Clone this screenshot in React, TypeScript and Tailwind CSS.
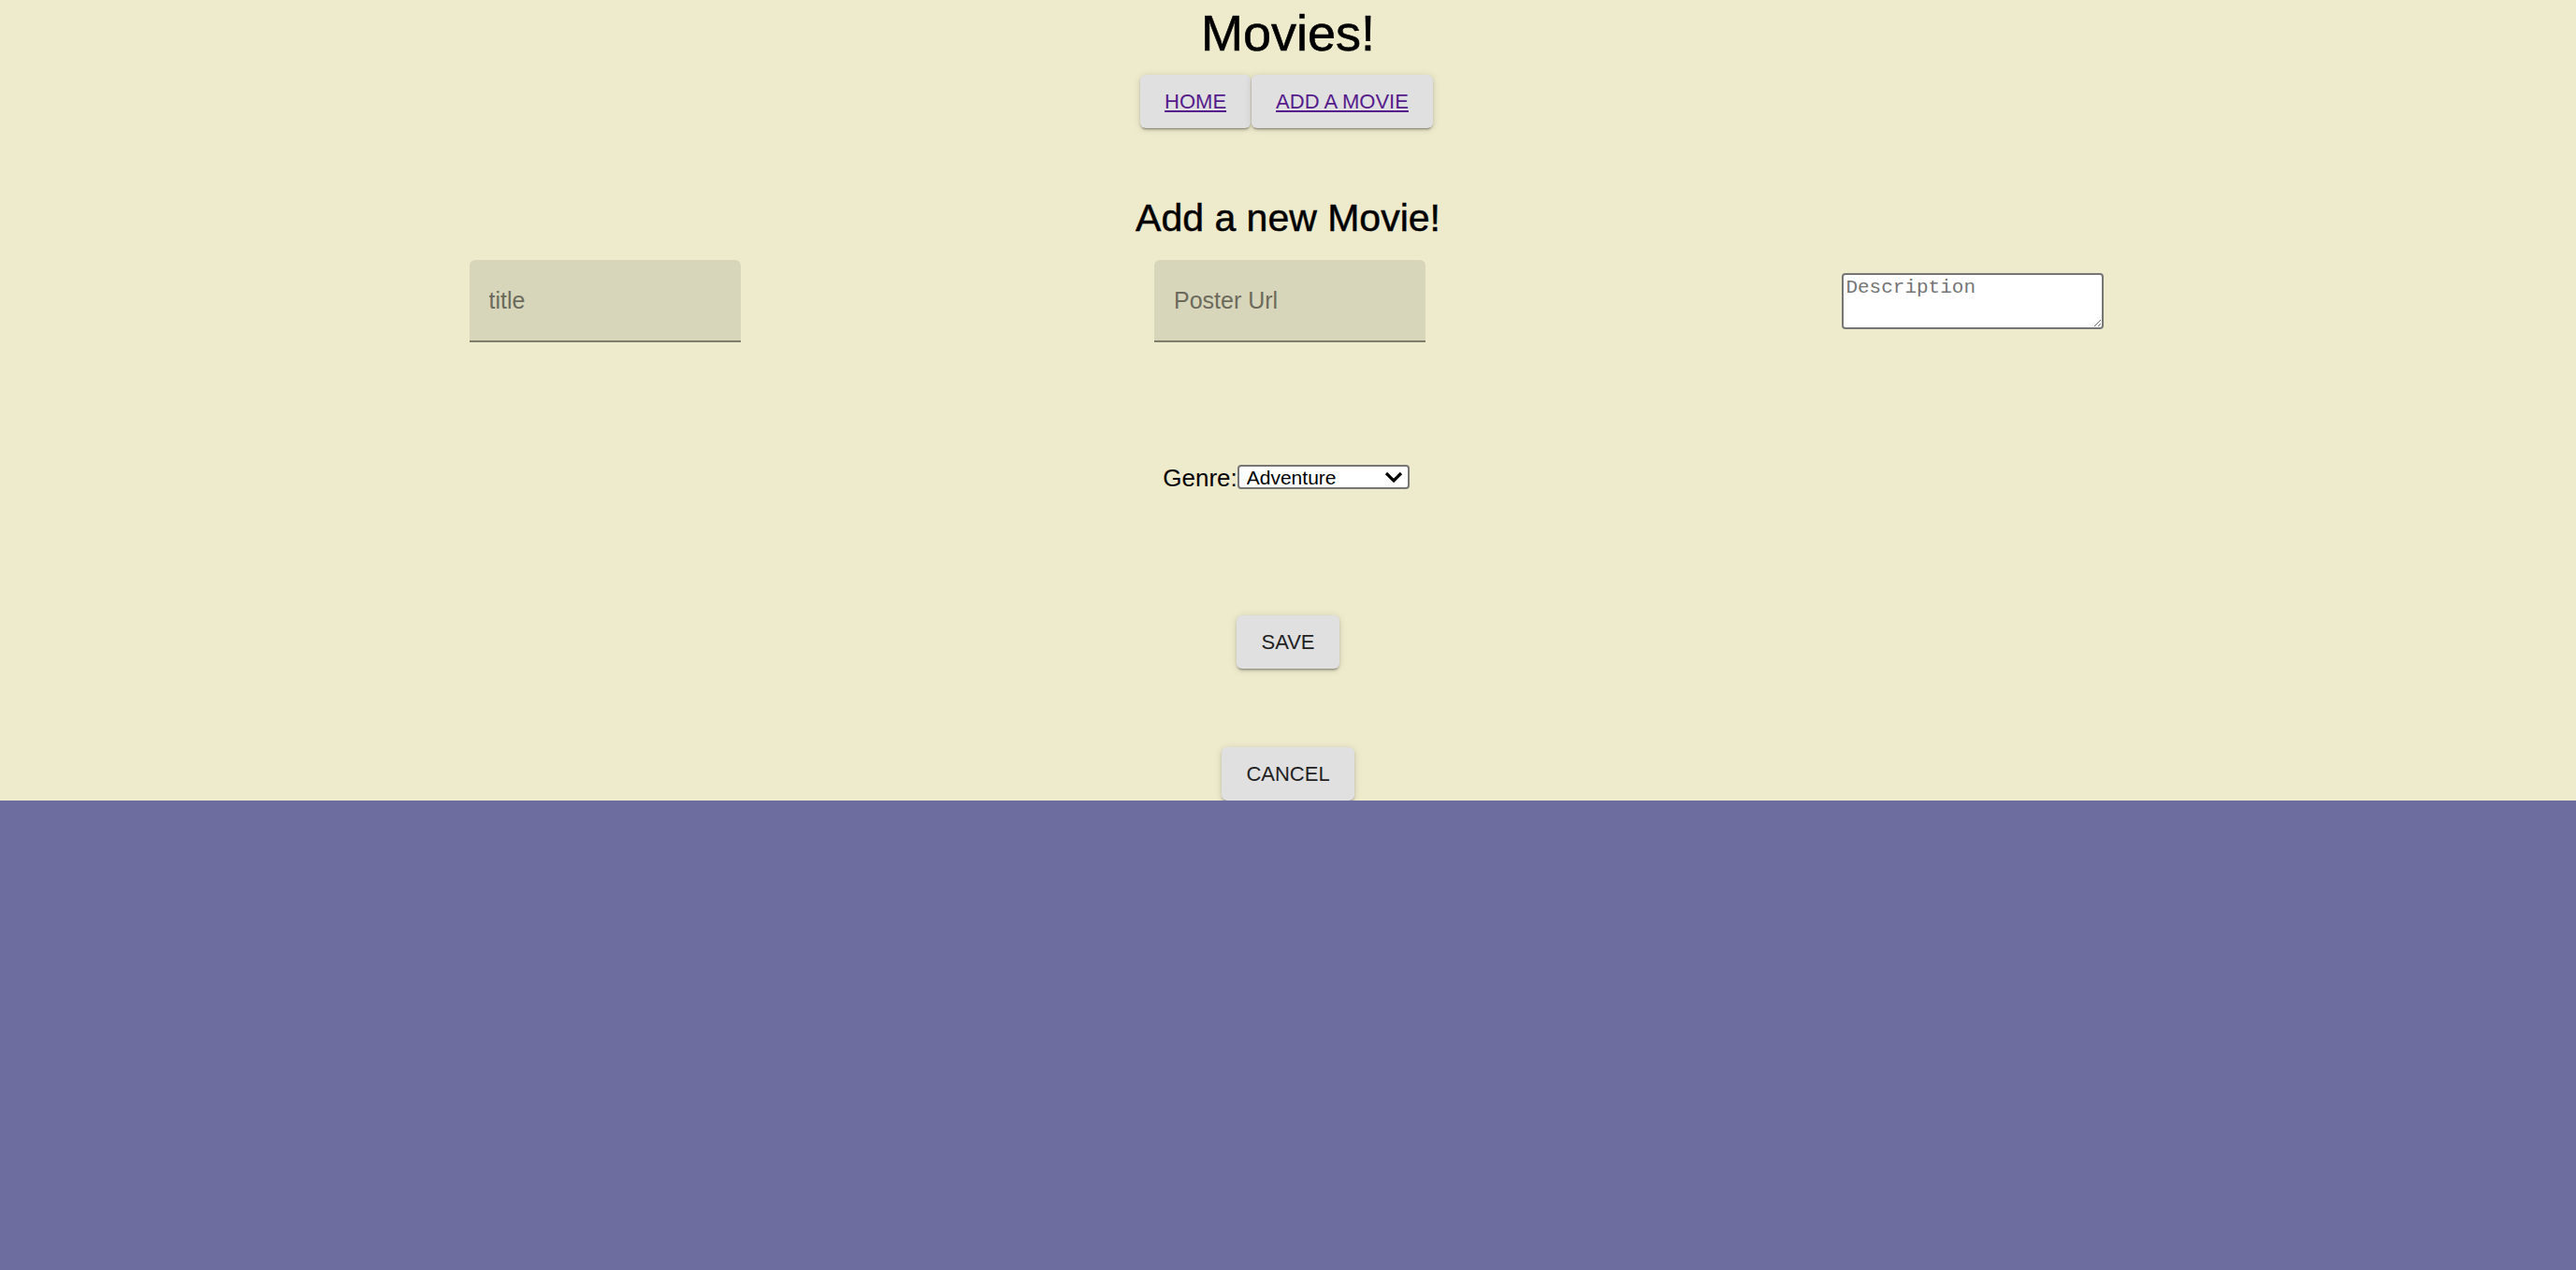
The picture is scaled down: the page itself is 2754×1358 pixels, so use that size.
import { useState } from 'react';

const btnCls =
    'flex items-center h-[57px] px-[26px] bg-[#e0e0e0] rounded-[6px] text-[22px] shadow-[0_3px_2px_-2px_rgba(0,0,0,0.3),0_2px_3px_0_rgba(0,0,0,0.14),0_1px_8px_0_rgba(0,0,0,0.12)]';

const inputCls =
    'w-[290px] h-[88px] bg-[#d8d6ba] rounded-t-[6px] border-b-2 border-[#7f7e6a] pl-[21px] text-[25px] text-[#222] placeholder:text-[#6b6a5c] outline-none';

export default function App() {
    const [genre, setGenre] = useState('Adventure');

    return (
        <div className="min-h-screen bg-[#6e6da0] font-['Liberation_Sans',Arial,sans-serif]">
            <div className="h-[856px] overflow-hidden bg-[#eeeacc] flex flex-col items-center">
                <h1 className="mt-[5px] text-[54px] leading-[60px] text-black [-webkit-text-stroke:0.6px_black]">Movies!</h1>

                {/* nav */}
                <nav className="mt-[15px] flex gap-[1px] pr-[3px]">
                    <a href="#" className={`${btnCls} text-[#551a8b] underline`}>HOME</a>
                    <a href="#" className={`${btnCls} text-[#551a8b] underline`}>ADD A MOVIE</a>
                </nav>

                <h2 className="mt-[72px] text-[41px] leading-[48px] text-black [-webkit-text-stroke:0.5px_black]">Add a new Movie!</h2>

                {/* inputs row */}
                <div className="mt-[21px] w-[80%] grid grid-cols-3 items-center justify-items-center">
                    <input className={`${inputCls} ml-[8px]`} placeholder="title" />
                    <input className={`${inputCls} ml-[4px]`} placeholder="Poster Url" />
                    <textarea
                        className="w-[280px] h-[60px] mr-[4px] bg-white border-2 border-[#767676] rounded-[4px] px-[2px] py-[2px] text-[21px] leading-[24px] font-['Liberation_Mono',monospace] placeholder:text-[#757575]"
                        placeholder="Description"
                    />
                </div>

                {/* genre */}
                <div className="mt-[130px] flex items-center h-[30px] pr-[4px]">
                    <label className="text-[26px] text-black">Genre:</label>
                    <div className="relative">
                        <select
                            value={genre}
                            onChange={(e) => setGenre(e.target.value)}
                            className="appearance-none w-[184px] h-[26px] bg-white border-2 border-[#767676] rounded-[4px] pl-[8px] text-[21px] leading-[21px] text-black"
                        >
                            <option>Adventure</option>
                            <option>Action</option>
                            <option>Comedy</option>
                            <option>Drama</option>
                            <option>Horror</option>
                        </select>
                        <svg
                            className="absolute right-[7px] top-[7px] pointer-events-none"
                            width="20"
                            height="12"
                            viewBox="0 0 20 12"
                        >
                            <path d="M2 2 L10 10 L18 2" fill="none" stroke="black" strokeWidth="3.2" />
                        </svg>
                    </div>
                </div>

                <button className={`${btnCls} mt-[132px] h-[58px] text-[#1f1f1f]`}>SAVE</button>
                <button className={`${btnCls} mt-[84px] h-[58px] text-[#1f1f1f]`}>CANCEL</button>
            </div>
        </div>
    );
}
